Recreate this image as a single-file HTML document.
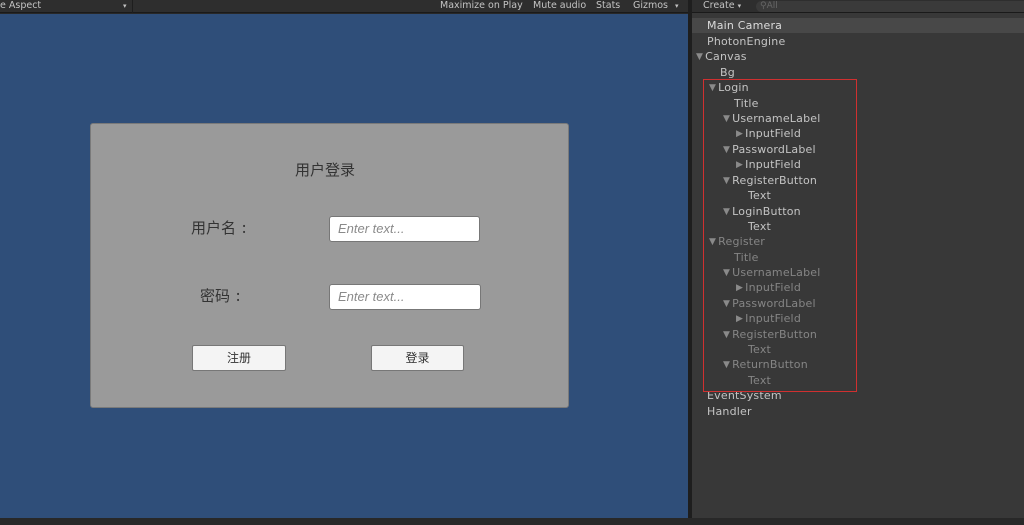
<!DOCTYPE html>
<html><head><meta charset="utf-8"><style>
*{margin:0;padding:0;box-sizing:border-box}
body{width:1024px;height:525px;overflow:hidden;background:#282828;position:relative;font-family:"DejaVu Sans","Liberation Sans",sans-serif}
.a{position:absolute}
.tb{font-size:9.5px;color:#c4c4c4;top:0;height:13px;line-height:12px}
.r{position:absolute;font-size:11px;line-height:15px;color:#c4c4c4;white-space:nowrap;letter-spacing:0.2px}
.g{color:#858585}
.t{font-size:9px;margin-right:2px;position:relative;top:-1px;color:#8a8a8a}
.cj{font-family:"Noto Sans CJK SC","WenQuanYi Zen Hei",sans-serif;color:#333}
.in{position:absolute;background:#fff;border:1px solid #777;border-radius:3px;font-family:"Liberation Sans",sans-serif;font-style:italic;color:#8a8a8a;font-size:13px;line-height:24px;padding-left:8px}
.bt{position:absolute;background:#f4f4f4;border:1px solid #777;border-radius:2px;text-align:center;font-size:12px;line-height:24px}
</style></head><body>
<div class="a" style="left:0;top:0;width:688px;height:13px;background:#2e2e2e;border-bottom:1px solid #1a1a1a"></div>
<div class="a" style="left:132px;top:0;width:1px;height:13px;background:#1e1e1e"></div>
<div class="a tb" style="left:0">e Aspect</div>
<div class="a tb" style="left:123px;font-size:7px">▾</div>
<div class="a tb" style="left:440px">Maximize on Play</div>
<div class="a tb" style="left:533px">Mute audio</div>
<div class="a tb" style="left:596px">Stats</div>
<div class="a tb" style="left:633px">Gizmos</div>
<div class="a tb" style="left:675px;font-size:7px">▾</div>
<div class="a" style="left:0;top:14px;width:688px;height:504px;background:#2f4e79"></div>
<div class="a" style="left:688px;top:0;width:4px;height:518px;background:#1e1e1e"></div>
<div class="a" style="left:692px;top:0;width:332px;height:518px;background:#383838"></div>
<div class="a" style="left:692px;top:0;width:332px;height:13px;background:#2e2e2e;border-bottom:1px solid #1a1a1a"></div>
<div class="a tb" style="left:703px">Create <span style="font-size:7px">▾</span></div>
<div class="a" style="left:756px;top:1px;width:268px;height:11px;background:#3a3a3a;border-radius:6px 0 0 6px;font-size:9px;color:#666;line-height:10px;padding-left:4px">⚲All</div>
<div class="a" style="left:692px;top:18px;width:332px;height:15px;background:#484848"></div>
<div class="a" style="left:0;top:518px;width:1024px;height:7px;background:#282828"></div>

<div class="a" style="left:90px;top:123px;width:479px;height:285px;background:#9a9a9a;border:1px solid #7a7a7a;border-radius:3px"></div>
<div class="a cj" style="left:295px;top:159px;font-size:15px;line-height:22px">用户登录</div>
<div class="a cj" style="left:191px;top:217px;font-size:15px;line-height:22px">用户名<span style="margin-left:6px">:</span></div>
<div class="a cj" style="left:200px;top:285px;font-size:15px;line-height:22px">密码<span style="margin-left:6px">:</span></div>
<div class="in" style="left:329px;top:216px;width:151px;height:26px">Enter text...</div>
<div class="in" style="left:329px;top:284px;width:152px;height:26px">Enter text...</div>
<div class="bt cj" style="left:192px;top:345px;width:94px;height:26px">注册</div>
<div class="bt cj" style="left:371px;top:345px;width:93px;height:26px">登录</div>

<div class="r" style="left:707px;top:18px;color:#dcdcdc">Main Camera</div>
<div class="r" style="left:707px;top:34px">PhotonEngine</div>
<div class="r" style="left:696px;top:49px"><span class="t">▼</span>Canvas</div>
<div class="r" style="left:720px;top:65px">Bg</div>
<div class="r" style="left:709px;top:80px"><span class="t">▼</span>Login</div>
<div class="r" style="left:734px;top:96px">Title</div>
<div class="r" style="left:723px;top:111px"><span class="t">▼</span>UsernameLabel</div>
<div class="r" style="left:736px;top:126px"><span class="t">▶</span>InputField</div>
<div class="r" style="left:723px;top:142px"><span class="t">▼</span>PasswordLabel</div>
<div class="r" style="left:736px;top:157px"><span class="t">▶</span>InputField</div>
<div class="r" style="left:723px;top:173px"><span class="t">▼</span>RegisterButton</div>
<div class="r" style="left:748px;top:188px">Text</div>
<div class="r" style="left:723px;top:204px"><span class="t">▼</span>LoginButton</div>
<div class="r" style="left:748px;top:219px">Text</div>
<div class="r g" style="left:709px;top:234px"><span class="t">▼</span>Register</div>
<div class="r g" style="left:734px;top:250px">Title</div>
<div class="r g" style="left:723px;top:265px"><span class="t">▼</span>UsernameLabel</div>
<div class="r g" style="left:736px;top:280px"><span class="t">▶</span>InputField</div>
<div class="r g" style="left:723px;top:296px"><span class="t">▼</span>PasswordLabel</div>
<div class="r g" style="left:736px;top:311px"><span class="t">▶</span>InputField</div>
<div class="r g" style="left:723px;top:327px"><span class="t">▼</span>RegisterButton</div>
<div class="r g" style="left:748px;top:342px">Text</div>
<div class="r g" style="left:723px;top:357px"><span class="t">▼</span>ReturnButton</div>
<div class="r g" style="left:748px;top:373px">Text</div>
<div class="r" style="left:707px;top:388px">EventSystem</div>
<div class="r" style="left:707px;top:404px">Handler</div>
<div class="a" style="left:703px;top:79px;width:154px;height:313px;border:1px solid #d03030"></div>
</body></html>
